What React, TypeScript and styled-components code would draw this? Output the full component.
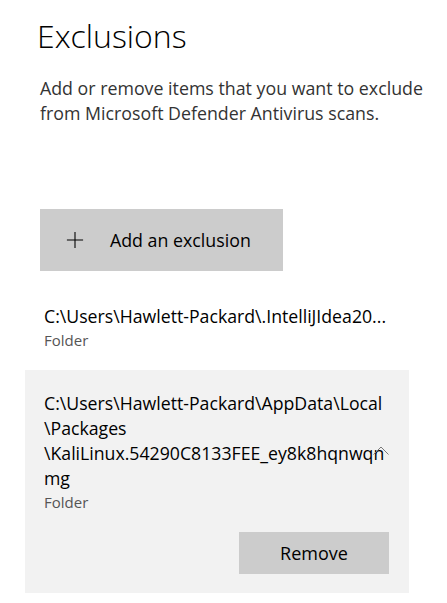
import styled, { createGlobalStyle } from 'styled-components';

const GlobalStyle = createGlobalStyle`
  html, body {
    margin: 0;
    padding: 0;
    background: #ffffff;
  }
  body {
    font-family: 'Open Sans', 'Noto Sans', sans-serif;
    color: #000000;
  }
`;

interface Exclusion {
  lines: string[];
  kind: string;
}

const items: Exclusion[] = [
  { lines: ['C:\\Users\\Hawlett-Packard\\.IntelliJIdea20...'], kind: 'Folder' },
  {
    lines: [
      'C:\\Users\\Hawlett-Packard\\AppData\\Local',
      '\\Packages',
      '\\KaliLinux.54290C8133FEE_ey8k8hqnwqn',
      'mg',
    ],
    kind: 'Folder',
  },
];

const App = () => {
  return (
    <Page>
      <GlobalStyle />
      <Title>Exclusions</Title>
      <Description>
        Add or remove items that you want to exclude
        <br />
        from Microsoft Defender Antivirus scans.
      </Description>
      <AddButton>
        <PlusIcon viewBox="0 0 20 20">
          <path d="M10 1v18M1 10h18" stroke="#000" strokeWidth="1.2" fill="none" />
        </PlusIcon>
        <span>Add an exclusion</span>
      </AddButton>
      <List>
        {items.map((item, i) => {
          const selected = i === 1;
          return (
            <Item key={i} selected={selected}>
              <Path>
                {item.lines.map((line) => (
                  <PathLine key={line}>{line}</PathLine>
                ))}
              </Path>
              <Kind>{item.kind}</Kind>
              {selected && (
                <>
                  <Chevron viewBox="0 0 16 9">
                    <path d="M0.5 8.5L8 1l7.5 7.5" stroke="#7a7a7a" strokeWidth="1" fill="none" />
                  </Chevron>
                  <Actions>
                    <RemoveButton>Remove</RemoveButton>
                  </Actions>
                </>
              )}
            </Item>
          );
        })}
      </List>
    </Page>
  );
};

const Page = styled.div`
  width: 447px;
  height: 603px;
  box-sizing: border-box;
  padding: 14px 0 0 0;
  overflow: hidden;
`;

const Title = styled.h1`
  margin: 0 0 0 37px;
  font-size: 32px;
  font-weight: 300;
  line-height: 44px;
  color: #000;
`;

const Description = styled.p`
  margin: 18px 0 0 40px;
  font-size: 17.8px;
  line-height: 25px;
  color: #333;
`;

const AddButton = styled.button`
  display: flex;
  align-items: center;
  gap: 26px;
  margin: 83px 0 0 40px;
  width: 243px;
  height: 62px;
  padding: 0 0 0 26px;
  border: none;
  background: #cccccc;
  font-family: inherit;
  font-size: 17.8px;
  color: #000;
`;

const PlusIcon = styled.svg`
  width: 18px;
  height: 18px;
`;

const List = styled.div`
  display: flex;
  flex-direction: column;
  margin-top: 25px;
  padding-left: 25px;
  gap: 7px;
`;

const Item = styled.div<{ selected: boolean }>`
  position: relative;
  width: 384px;
  box-sizing: border-box;
  padding: ${(p) => (p.selected ? '21px 20px 19px 19px' : '8px 20px 12px 19px')};
  background: ${(p) => (p.selected ? '#f2f2f2' : 'transparent')};
`;

const Path = styled.div`
  font-size: 17.7px;
  line-height: 25px;
  color: #000;
`;

const PathLine = styled.div`
  white-space: nowrap;
`;

const Kind = styled.div`
  font-size: 15px;
  line-height: 22px;
  color: #555;
`;

const Chevron = styled.svg`
  position: absolute;
  left: 348px;
  top: 76px;
  width: 16px;
  height: 9px;
`;

const Actions = styled.div`
  display: flex;
  justify-content: flex-end;
  margin-top: 19px;
`;

const RemoveButton = styled.button`
  width: 150px;
  height: 42px;
  border: none;
  background: #cccccc;
  font-family: inherit;
  font-size: 18px;
  color: #000;
`;

export default App;
